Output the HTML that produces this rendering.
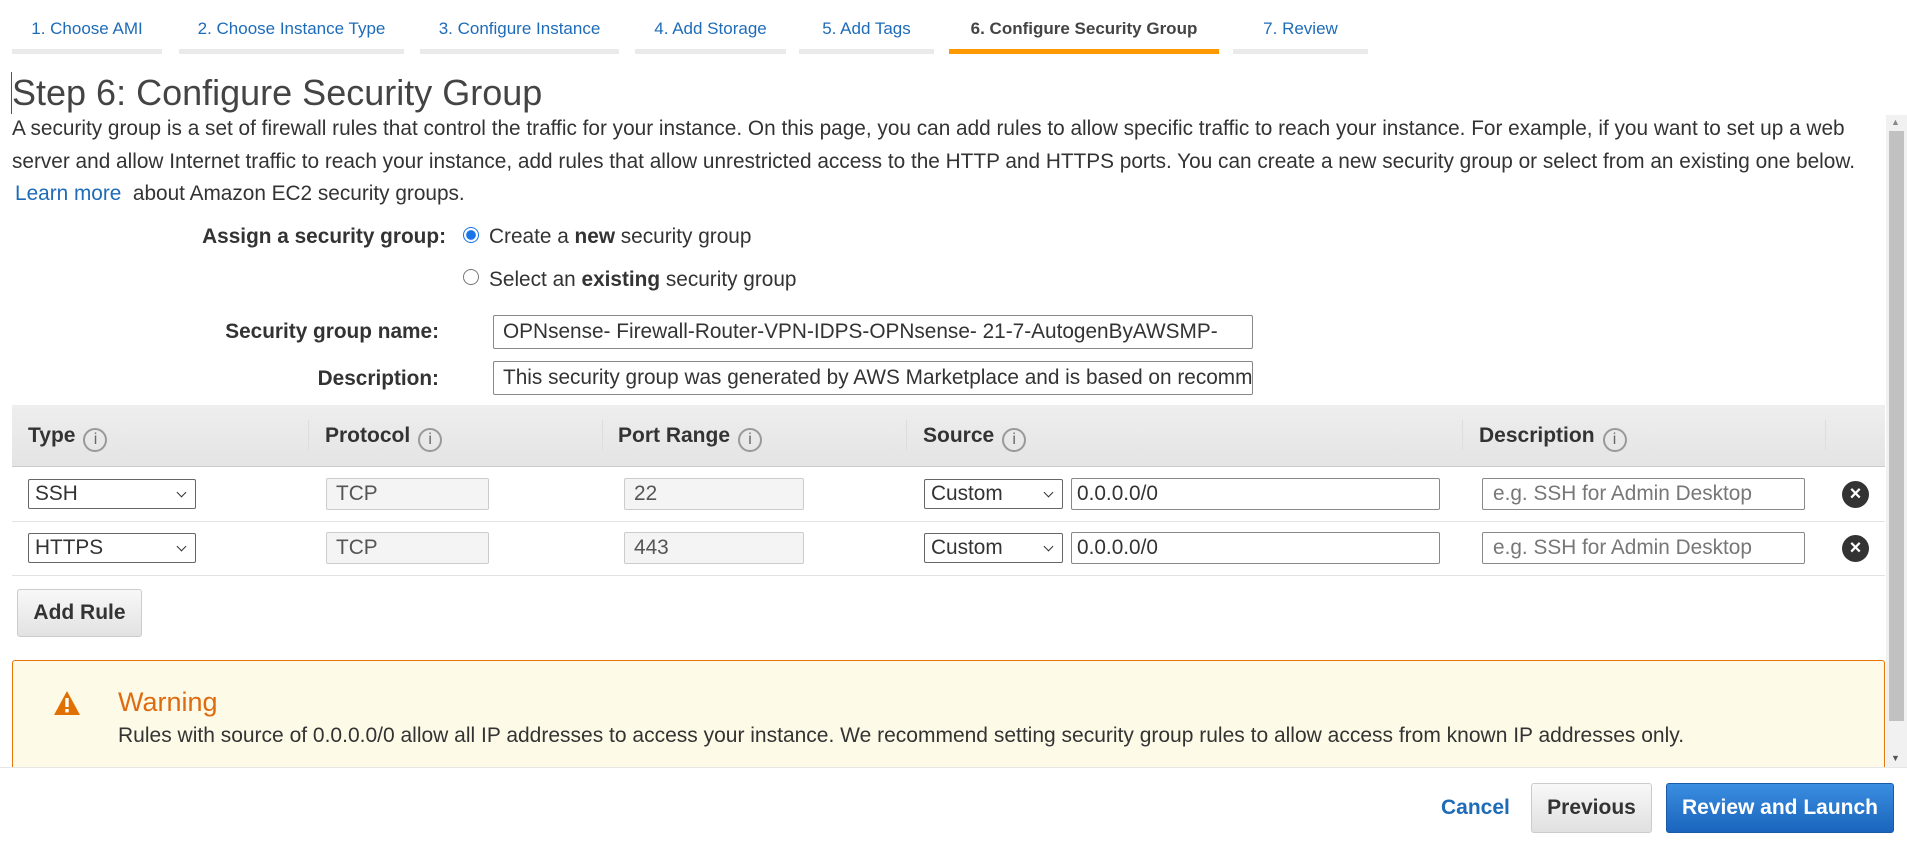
<!DOCTYPE html>
<html><head><meta charset="utf-8"><style>
*{box-sizing:border-box;margin:0;padding:0}
body{width:1907px;height:843px;overflow:hidden;background:#fff;font-family:"Liberation Sans",Arial,sans-serif;color:#444;position:relative}
.a{position:absolute;white-space:nowrap}
.tab{position:absolute;top:18px;height:36px;font-size:17px;color:#1e6bb8;text-align:center;border-bottom:5px solid #eaeaea;line-height:22px}
.tab.on{color:#444;font-weight:bold;border-bottom-color:#f90}
.p{font-size:20.8px;color:#333}
.lbl{font-size:20.8px;font-weight:bold;color:#333;text-align:right}
.inp{position:absolute;border:1px solid #888;border-radius:2px;background:#fff;font-size:20.8px;color:#333;padding-left:9px;line-height:38px;height:40px;overflow:hidden;white-space:nowrap}
.ro{background:#f4f4f4;border:1px solid #ccc;color:#555}
.sel{position:absolute;border:1px solid #666;border-radius:2px;background:#fff;font-size:20.8px;color:#333;padding-left:6px;height:30px;line-height:28px}
.sel:after{content:"";position:absolute;right:10px;top:9px;width:6px;height:6px;border-right:1.5px solid #333;border-bottom:1.5px solid #333;transform:rotate(45deg)}
.th{position:absolute;top:424px;font-size:21px;font-weight:bold;color:#333}
.info{display:inline-block;width:24px;height:24px;border:2px solid #999;border-radius:50%;text-align:center;font-size:16px;line-height:20px;color:#666;font-weight:normal;margin-left:8px;vertical-align:-2px}
.div{position:absolute;top:420px;height:30px;width:1px;background:#ddd}
.x{position:absolute;width:27px;height:27px;border-radius:50%;background:#333;color:#fff;text-align:center;font-size:20px;line-height:27px;font-weight:bold}
.btn{position:absolute;border-radius:3px;font-size:21px;font-weight:bold;text-align:center}
</style></head><body>
<div class="tab" style="left:12px;width:150px">1. Choose AMI</div>
<div class="tab" style="left:179px;width:225px">2. Choose Instance Type</div>
<div class="tab" style="left:420px;width:199px">3. Configure Instance</div>
<div class="tab" style="left:635px;width:151px">4. Add Storage</div>
<div class="tab" style="left:799px;width:135px">5. Add Tags</div>
<div class="tab on" style="left:949px;width:270px">6. Configure Security Group</div>
<div class="tab" style="left:1233px;width:135px">7. Review</div>

<div class="a" style="left:11px;top:72px;height:42px;border-left:1px solid #555"></div>
<div class="a" style="left:12px;top:72px;font-size:36px;color:#444">Step 6: Configure Security Group</div>
<div class="a p" style="left:12px;top:117px">A security group is a set of firewall rules that control the traffic for your instance. On this page, you can add rules to allow specific traffic to reach your instance. For example, if you want to set up a web</div>
<div class="a p" style="left:12px;top:150px">server and allow Internet traffic to reach your instance, add rules that allow unrestricted access to the HTTP and HTTPS ports. You can create a new security group or select from an existing one below.</div>
<div class="a p" style="left:15px;top:182px"><span style="color:#1e6bb8">Learn more</span>&nbsp; about Amazon EC2 security groups.</div>

<div class="a lbl" style="right:1461px;top:225px">Assign a security group:</div>
<div class="a" style="left:463px;top:227px;width:16px;height:16px;border-radius:50%;border:1px solid #1a73e8;background:radial-gradient(#1a73e8 45%,#fff 52%)"></div>
<div class="a p" style="left:489px;top:225px">Create a <b>new</b> security group</div>
<div class="a" style="left:463px;top:269px;width:16px;height:16px;border-radius:50%;border:1px solid #777"></div>
<div class="a p" style="left:489px;top:268px">Select an <b>existing</b> security group</div>

<div class="a lbl" style="right:1468px;top:320px">Security group name:</div>
<div class="inp" style="left:493px;top:315px;width:760px;height:34px;line-height:32px">OPNsense- Firewall-Router-VPN-IDPS-OPNsense- 21-7-AutogenByAWSMP-</div>
<div class="a lbl" style="right:1468px;top:367px">Description:</div>
<div class="inp" style="left:493px;top:361px;width:760px;height:34px;line-height:32px">This security group was generated by AWS Marketplace and is based on recommended settings</div>

<div class="a" style="left:12px;top:405px;width:1873px;height:62px;background:linear-gradient(#eee,#e4e4e4);border-bottom:1px solid #ccc"></div>
<div class="th" style="left:28px">Type<span class="info">i</span></div>
<div class="th" style="left:325px">Protocol<span class="info">i</span></div>
<div class="th" style="left:618px">Port Range<span class="info">i</span></div>
<div class="th" style="left:923px">Source<span class="info">i</span></div>
<div class="th" style="left:1479px">Description<span class="info">i</span></div>
<div class="div" style="left:308px"></div><div class="div" style="left:602px"></div><div class="div" style="left:906px"></div><div class="div" style="left:1462px"></div><div class="div" style="left:1825px"></div>

<div class="sel" style="left:28px;top:479px;width:168px">SSH</div>
<div class="inp ro" style="left:326px;top:478px;width:163px;height:32px;line-height:30px">TCP</div>
<div class="inp ro" style="left:624px;top:478px;width:180px;height:32px;line-height:30px">22</div>
<div class="sel" style="left:924px;top:479px;width:139px">Custom</div>
<div class="inp" style="left:1071px;top:478px;width:369px;height:32px;line-height:30px;padding-left:5px">0.0.0.0/0</div>
<div class="inp" style="left:1482px;top:478px;width:323px;height:32px;line-height:30px;color:#777;padding-left:10px">e.g. SSH for Admin Desktop</div>
<div class="x" style="left:1842px;top:481px">×</div>
<div class="a" style="left:12px;top:521px;width:1873px;height:1px;background:#e2e2e2"></div>

<div class="sel" style="left:28px;top:533px;width:168px">HTTPS</div>
<div class="inp ro" style="left:326px;top:532px;width:163px;height:32px;line-height:30px">TCP</div>
<div class="inp ro" style="left:624px;top:532px;width:180px;height:32px;line-height:30px">443</div>
<div class="sel" style="left:924px;top:533px;width:139px">Custom</div>
<div class="inp" style="left:1071px;top:532px;width:369px;height:32px;line-height:30px;padding-left:5px">0.0.0.0/0</div>
<div class="inp" style="left:1482px;top:532px;width:323px;height:32px;line-height:30px;color:#777;padding-left:10px">e.g. SSH for Admin Desktop</div>
<div class="x" style="left:1842px;top:535px">×</div>
<div class="a" style="left:12px;top:575px;width:1873px;height:1px;background:#e2e2e2"></div>

<div class="btn" style="left:17px;top:589px;width:125px;height:48px;line-height:46px;background:linear-gradient(#f8f8f8,#e2e2e2);border:1px solid #ccc;color:#333">Add Rule</div>

<div class="a" style="left:12px;top:660px;width:1873px;height:107px;background:#fefae8;border:1px solid #e8750a;border-bottom:none;border-radius:3px 3px 0 0"></div>
<svg class="a" style="left:53px;top:689px" width="28" height="28" viewBox="0 0 28 28"><path d="M14 2 L27 26 H1 Z" fill="#e07000"/><rect x="12.3" y="9" width="3.4" height="9" fill="#fff"/><rect x="12.3" y="20" width="3.4" height="3.4" fill="#fff"/></svg>
<div class="a" style="left:118px;top:687px;font-size:27px;color:#dd6b10">Warning</div>
<div class="a p" style="left:118px;top:724px;font-size:21px">Rules with source of 0.0.0.0/0 allow all IP addresses to access your instance. We recommend setting security group rules to allow access from known IP addresses only.</div>

<div class="a" style="left:1886px;top:115px;width:21px;height:652px;background:#f1f1f1"></div>
<div class="a" style="left:1889px;top:131px;width:15px;height:590px;background:#c1c1c1"></div>
<div class="a" style="left:1891px;top:117px;font-size:9px;color:#888">▲</div>
<div class="a" style="left:1891px;top:753px;font-size:9px;color:#555">▼</div>
<div class="a" style="left:0;top:767px;width:1907px;height:1px;background:#e6e6e6"></div>

<div class="a" style="left:1441px;top:796px;font-size:21px;font-weight:bold;color:#1e6bb8">Cancel</div>
<div class="btn" style="left:1531px;top:783px;width:121px;height:50px;line-height:48px;background:linear-gradient(#f8f8f8,#e0e0e0);border:1px solid #ccc;color:#333">Previous</div>
<div class="btn" style="left:1666px;top:783px;width:228px;height:50px;line-height:48px;background:linear-gradient(#3a8ee0,#1a64bd);border:1px solid #1a5aa8;color:#fff">Review and Launch</div>
</body></html>
